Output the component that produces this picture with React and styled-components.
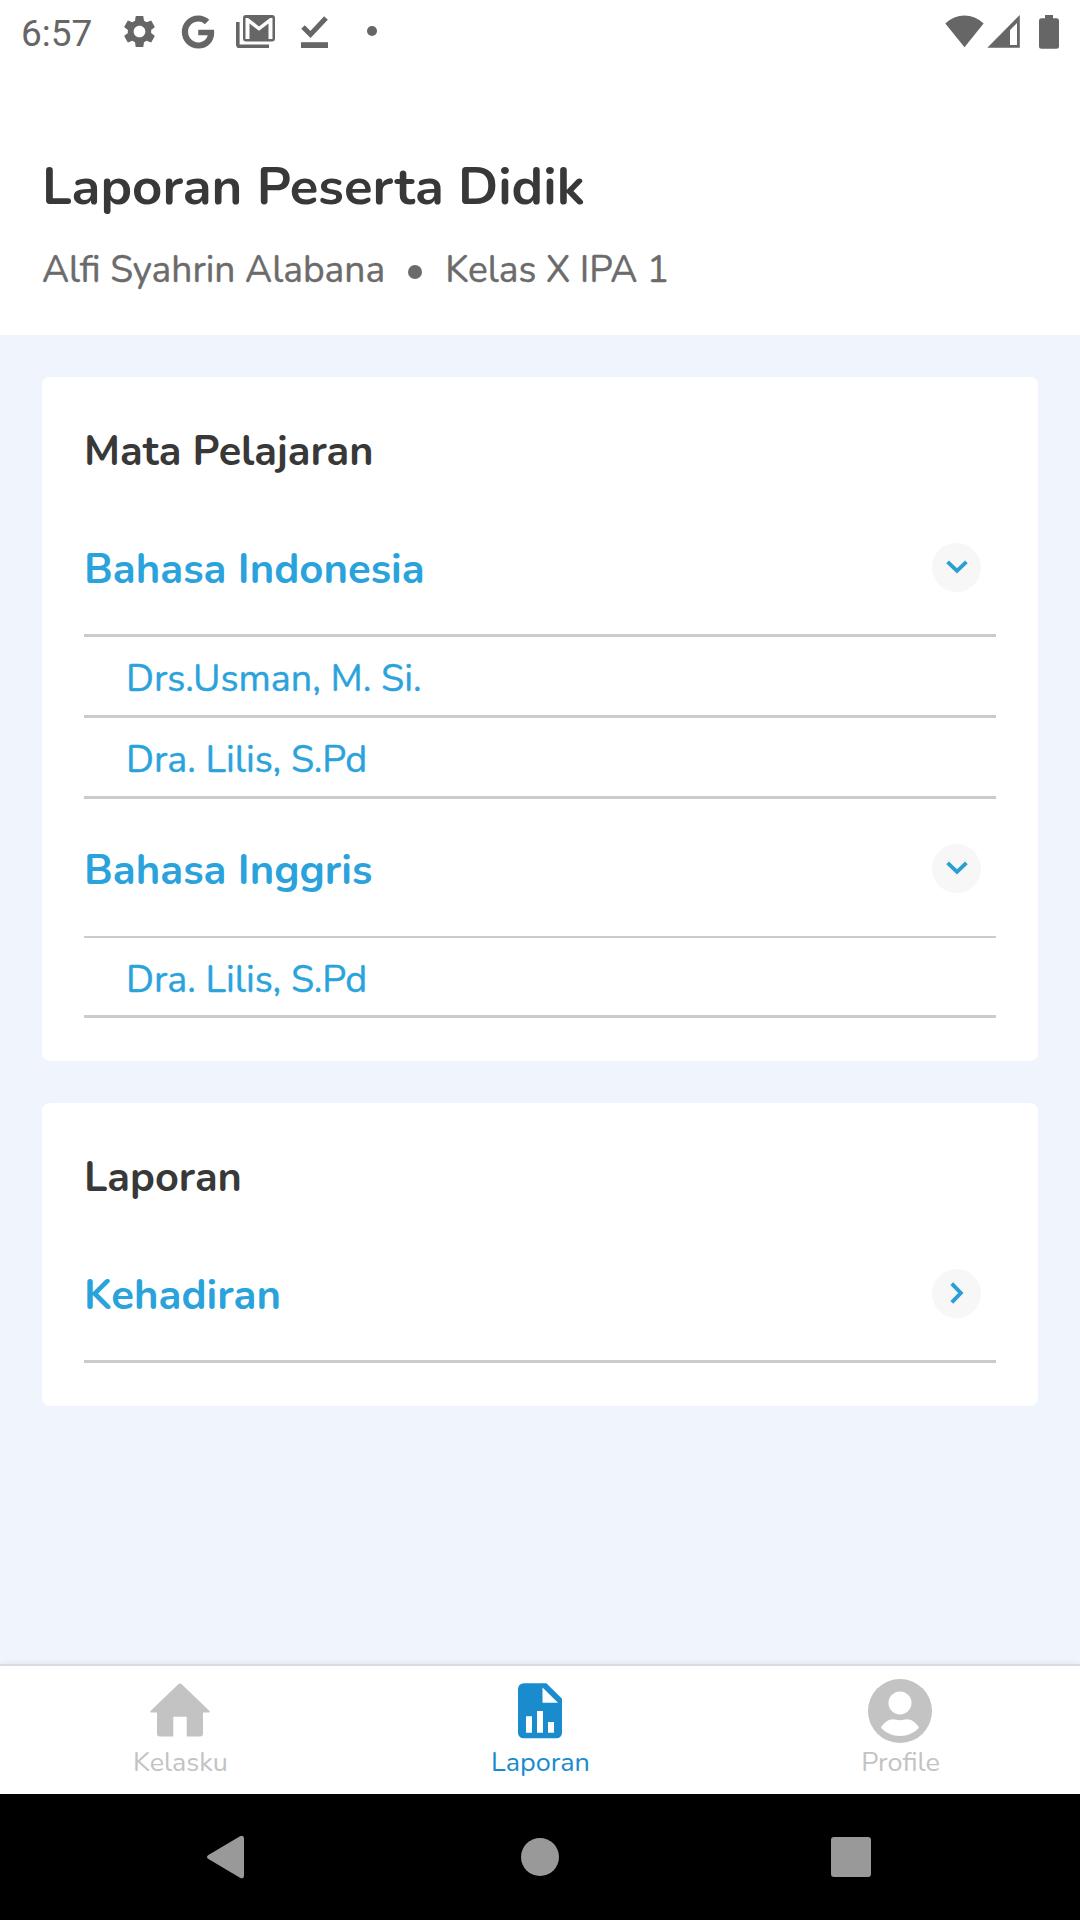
import React, { useState } from 'react'
import styled, { createGlobalStyle } from 'styled-components'
import { FaGoogle } from 'react-icons/fa'
import { MdSettings } from 'react-icons/md'


const GlobalStyle = createGlobalStyle`
    * {
        box-sizing: border-box;
    }
    body {
        margin: 0;
        background: #eff4fd;
    }
    button {
        border: none;
        background: none;
        padding: 0;
        font: inherit;
        color: inherit;
        cursor: pointer;
    }
    svg {
        display: block;
        flex-shrink: 0;
    }
`

const Screen = styled.div`
    width: 1080px;
    height: 1920px;
    display: flex;
    flex-direction: column;
    background: #eff4fd;
    font-family: Nunito, Lato, 'Noto Sans', sans-serif;
    overflow: hidden;
`

const StatusBar = styled.div`
    height: 63px;
    display: flex;
    justify-content: space-between;
    padding: 0 21px 0 21px;
    background: #fff;
    color: #666;
`

const StatusGroup = styled.div`
    height: 63px;
    display: flex;
    align-items: center;
`

const Clock = styled.span`
    width: 98px;
    font-family: Roboto, sans-serif;
    font-size: 37px;
    font-weight: 400;
    line-height: 66px;
    padding-top: 4px;
`

const StatusIcons = styled.div`
    display: flex;
    align-items: flex-start;
    height: 34px;

    > :nth-child(1) { margin: -3px 22px 0 1px; }
    > :nth-child(2) { margin: 0 21px 0 0; }
    > :nth-child(3) { margin: 0 25px 0 0; }
    > :nth-child(4) { margin: 0 38px 0 0; }
`

const MoreDot = styled.i`
    width: 10px;
    height: 10px;
    margin-top: 11px;
    border-radius: 50%;
    background: #666;
`

const Header = styled.header`
    height: 272px;
    padding: 88px 42px 0;
    background: #fff;
`

const Title = styled.h1`
    margin: 0 0 21px;
    font-size: 52.7px;
    font-weight: 700;
    line-height: 73px;
    color: #383838;
`

const Subtitle = styled.div`
    display: flex;
    align-items: center;
    font-size: 37.2px;
    line-height: 50px;
    color: #6b6b6b;
    -webkit-text-stroke: .4px;
`

const Dot = styled.i`
    width: 14px;
    height: 14px;
    margin: 4px 23px 0 23px;
    border-radius: 50%;
    background: #6b6b6b;
`

const Content = styled.main`
    flex: 1;
    display: flex;
    flex-direction: column;
    gap: 42px;
    padding: 42px;
`

const Card = styled.section`
    padding: 45px 42px 43px;
    border-radius: 8px;
    background: #fff;
`

const CardTitle = styled.h2`
    margin: 0 0 18px;
    font-size: 41.5px;
    font-weight: 700;
    line-height: 59px;
    color: #383838;
`

const Subject = styled.div`
    height: ${props => props.height}px;
    display: flex;
    align-items: center;
    justify-content: space-between;
    padding: 6px 15px 0 0;
    border-bottom: ${props => props.line || 3}px solid #cbcbcb;
    font-size: 41.9px;
    font-weight: 700;
    color: #2aa3dc;
`

const Toggle = styled.button`
    width: 49px;
    height: 49px;
    display: flex;
    align-items: center;
    justify-content: center;
    margin-top: -5px;
    border-radius: 50%;
    background: #f7f7f7;

    svg {
        transform: rotate(${props => props.$open ? 0 : -90}deg);
    }
`

const Teacher = styled.div`
    height: ${props => props.height}px;
    display: flex;
    align-items: center;
    padding: 5px 0 0 42px;
    border-bottom: 3px solid #cbcbcb;
    font-size: 37.7px;
    color: #2aa3dc;
    -webkit-text-stroke: .4px;
`

const TabBar = styled.nav`
    height: 130px;
    display: flex;
    border-top: 2px solid #d9dde3;
    background: #fff;
    box-shadow: 0 -1px 5px rgba(0, 0, 0, .06);
`

const Tab = styled.button`
    flex: 1;
    display: flex;
    flex-direction: column;
    align-items: center;
    padding-top: 13px;
    font-size: 27px;
    line-height: 39px;
    color: ${props => props.$active ? '#1a8ccd' : '#c3c3c3'};
`

const TabLabel = styled.span`
    padding-left: 1px;
`

const NavBar = styled.div`
    height: 126px;
    display: flex;
    align-items: center;
    justify-content: space-between;
    padding: 0 209px 0 206px;
    background: #000;

    > :nth-child(2) { margin-left: 5px; }
`


function ChevronIcon() {
    return (
        <svg width="22" height="14" viewBox="0 0 22 14">
            <path d="M1.600 1.800l9.400 9 9.400-9" fill="none" stroke="#2a9fd3" strokeWidth="3.900" />
        </svg>
    )
}

function GmailIcon() {
    return (
        <svg width="40" height="34" viewBox="0 0 40 34" fill="#666">
            <path d="M0 7h3.600v22.400H33V33H3.600a3.600 3.600 0 0 1-3.600-3.600z" />
            <path fillRule="evenodd" d="M10 0h26a3 3 0 0 1 3 3v20.500a3 3 0 0 1-3 3H10a3 3 0 0 1-3-3V3a3 3 0 0 1 3-3zM9.500 3v21h4V8.500L23 15.800l9.500-7.300V24h4V3h-2.500L23 11.400 12 3z" />
        </svg>
    )
}

function DoneIcon() {
    return (
        <svg width="28" height="34" viewBox="0 0 28 34">
            <path d="M2 12l7.500 7.500L25 3" fill="none" stroke="#666" strokeWidth="5" />
            <path d="M0 27.200h27V33H0z" fill="#666" />
        </svg>
    )
}

function SignalIcons() {
    return (
        <svg width="114" height="36" viewBox="945 13 114 36" fill="#666">
            <path d="M945.300 22.500c11-10.700 27.300-10.700 38.300 0L964.500 46.300z" />
            <path fillRule="evenodd" d="M1019.800 14v32.700H987.300zM1017 22l-7 7v15h7z" />
            <path d="M1045 14h8v3.300h3.500a2.500 2.500 0 0 1 2.500 2.500v25.500a2.500 2.500 0 0 1-2.500 2.500h-15a2.500 2.500 0 0 1-2.500-2.500V19.800a2.500 2.500 0 0 1 2.500-2.500h3.500z" />
        </svg>
    )
}

function HomeIcon() {
    return (
        <svg width="64" height="64" viewBox="0 0 64 64" fill="currentColor">
            <path d="M30 5.400q2-1.800 4 0L61.500 32q.8 1.500-.8 1.500H55v21a3 3 0 0 1-3 3H38.700V37.700H25.300v19.800H12a3 3 0 0 1-3-3v-21H3.300q-1.600 0-.8-1.500z" />
        </svg>
    )
}

function ReportIcon() {
    return (
        <svg width="64" height="64" viewBox="0 0 64 64" fill="currentColor">
            <path fillRule="evenodd" d="M16 4.300h22.400L54 19.800v34a5.500 5.500 0 0 1-5.500 5.500h-33A5.500 5.500 0 0 1 10 53.800V10a5.700 5.700 0 0 1 6-5.700zM34.500 8.500v15.200H50zM18 37.200v16.600h6V37.200zM29 31.900v21.900h6V31.900zM40 42.900v10.900h6V42.900z" />
        </svg>
    )
}

function ProfileIcon() {
    return (
        <svg width="64" height="64" viewBox="0 0 64 64">
            <circle cx="32" cy="32" r="32" fill="currentColor" />
            <circle cx="32" cy="23.900" r="11.500" fill="#fff" />
            <path d="M13 48.500c3-5 7.500-8.300 12-8.300 2.700 0 4 1 7 1s4.300-1 7-1c4.500 0 9 3.300 12 8.300-4.500 5.500-11.500 8.500-19 8.500s-14.500-3-19-8.500z" fill="#fff" />
        </svg>
    )
}

const subjects = [
    { name: 'Bahasa Indonesia', height: 138, line: 3, teachers: [
        { name: 'Drs.Usman, M. Si.', height: 81 },
        { name: 'Dra. Lilis, S.Pd', height: 81 },
    ] },
    { name: 'Bahasa Inggris', height: 139, line: 2, teachers: [
        { name: 'Dra. Lilis, S.Pd', height: 80 },
    ] },
]

const tabs = [
    { name: 'Kelasku', Icon: HomeIcon },
    { name: 'Laporan', Icon: ReportIcon },
    { name: 'Profile', Icon: ProfileIcon },
]


function App() {

    const [closed, setClosed] = useState([])
    const [active, setActive] = useState('Laporan')

    const toggle = (name) => {
        setClosed(closed.includes(name) ? closed.filter(n => n !== name) : [...closed, name])
    }

    return (
        <Screen>
            <GlobalStyle />
            <StatusBar>
                <StatusGroup>
                    <Clock>6:57</Clock>
                    <StatusIcons>
                        <MdSettings size={39} />
                        <FaGoogle size={34} />
                        <GmailIcon />
                        <DoneIcon />
                        <MoreDot />
                    </StatusIcons>
                </StatusGroup>
                <StatusGroup>
                    <SignalIcons />
                </StatusGroup>
            </StatusBar>
            <Header>
                <Title>Laporan Peserta Didik</Title>
                <Subtitle>
                    <span>Alfi Syahrin Alabana</span>
                    <Dot />
                    <span>Kelas X IPA 1</span>
                </Subtitle>
            </Header>
            <Content>
                <Card>
                    <CardTitle>Mata Pelajaran</CardTitle>
                    {
                        subjects.map(item => (
                            <React.Fragment key={item.name}>
                                <Subject height={item.height} line={item.line}>
                                    {item.name}
                                    <Toggle $open={!closed.includes(item.name)} onClick={() => toggle(item.name)}>
                                        <ChevronIcon />
                                    </Toggle>
                                </Subject>
                                {
                                    closed.includes(item.name) ? '' : item.teachers.map(teacher => (
                                        <Teacher key={teacher.name} height={teacher.height}>{teacher.name}</Teacher>
                                    ))
                                }
                            </React.Fragment>
                        ))
                    }
                </Card>
                <Card>
                    <CardTitle>Laporan</CardTitle>
                    <Subject height={138}>
                        Kehadiran
                        <Toggle>
                            <ChevronIcon />
                        </Toggle>
                    </Subject>
                </Card>
            </Content>
            <TabBar>
                {
                    tabs.map(({ name, Icon }) => (
                        <Tab key={name} $active={active === name} onClick={() => setActive(name)}>
                            <Icon />
                            <TabLabel>{name}</TabLabel>
                        </Tab>
                    ))
                }
            </TabBar>
            <NavBar>
                <svg width="38" height="44" viewBox="0 0 38 44" fill="#999">
                    <path d="M2 20.200L34 1.300q4-1.800 4 2.200v37q0 4-4 2.200L2 23.800q-2-1.800 0-3.600z" />
                </svg>
                <svg width="38" height="38" viewBox="0 0 38 38" fill="#999">
                    <circle cx="19" cy="19" r="19" />
                </svg>
                <svg width="40" height="40" viewBox="0 0 40 40" fill="#999">
                    <rect width="40" height="40" rx="3" />
                </svg>
            </NavBar>
        </Screen>
    )
}

export default App
